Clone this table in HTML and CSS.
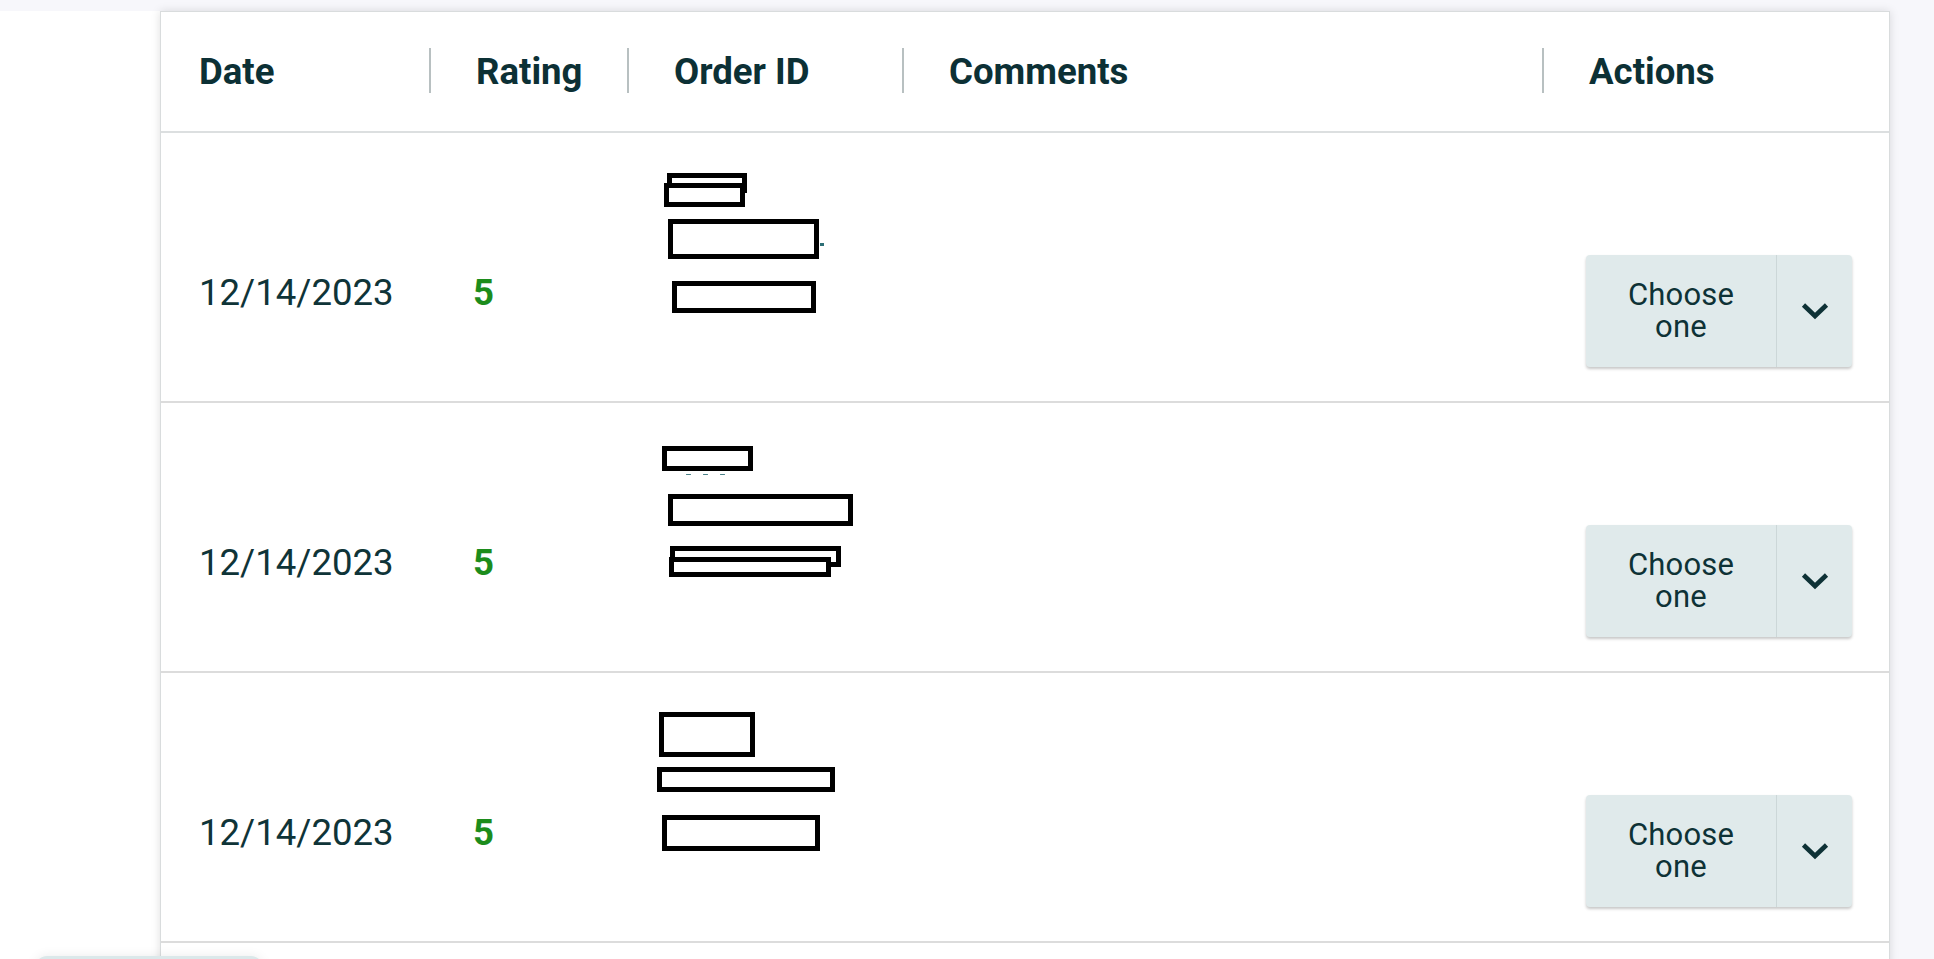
FILE: index.html
```html
<!DOCTYPE html>
<html lang="en">
<head>
<meta charset="utf-8">
<title>Reviews</title>
<link rel="stylesheet" href="styles.css">
</head>
<body>
<div class="layout">
  <div class="rail"></div>
  <main class="main">
    <div class="card">
      <div class="grid head">
        <div class="hcell c1">Date</div>
        <div class="hcell">Rating</div>
        <div class="hcell">Order ID</div>
        <div class="hcell">Comments</div>
        <div class="hcell">Actions</div>
      </div>

      <div class="grid row">
        <div class="cell c1 date">12/14/2023</div>
        <div class="cell rating">5</div>
        <div class="cell order">
          <span class="peek dash" style="left:193px;top:110px"></span>
          <span class="peek dots" style="left:48px;top:145px;width:133px"></span>
          <span class="redact" style="left:40px;top:40px;width:80px;height:20px"></span>
          <span class="redact" style="left:37px;top:50px;width:81px;height:24px"></span>
          <span class="redact" style="left:41px;top:86px;width:151px;height:40px"></span>
          <span class="redact" style="left:45px;top:148px;width:144px;height:32px"></span>
        </div>
        <div class="cell comments"></div>
        <div class="cell actions">
          <div class="split">
            <button class="split-main">Choose one</button>
            <button class="split-toggle" aria-label="More">
              <svg width="28" height="18" viewBox="0 0 28 18"><polyline points="2.5,3 14,14 25.5,3" fill="none" stroke="currentColor" stroke-width="4.6"/></svg>
            </button>
          </div>
        </div>
      </div>

      <div class="grid row">
        <div class="cell c1 date">12/14/2023</div>
        <div class="cell rating">5</div>
        <div class="cell order">
          <span class="peek dots" style="left:53px;top:67px;width:50px"></span>
          <span class="redact" style="left:35px;top:43px;width:91px;height:25px"></span>
          <span class="redact" style="left:41px;top:91px;width:185px;height:32px"></span>
          <span class="redact" style="left:43px;top:143px;width:171px;height:21px"></span>
          <span class="redact" style="left:42px;top:154px;width:162px;height:20px"></span>
        </div>
        <div class="cell comments"></div>
        <div class="cell actions">
          <div class="split">
            <button class="split-main">Choose one</button>
            <button class="split-toggle" aria-label="More">
              <svg width="28" height="18" viewBox="0 0 28 18"><polyline points="2.5,3 14,14 25.5,3" fill="none" stroke="currentColor" stroke-width="4.6"/></svg>
            </button>
          </div>
        </div>
      </div>

      <div class="grid row">
        <div class="cell c1 date">12/14/2023</div>
        <div class="cell rating">5</div>
        <div class="cell order">
          <span class="redact" style="left:32px;top:39px;width:96px;height:45px"></span>
          <span class="redact" style="left:30px;top:94px;width:178px;height:25px"></span>
          <span class="redact" style="left:35px;top:142px;width:158px;height:36px"></span>
        </div>
        <div class="cell comments"></div>
        <div class="cell actions">
          <div class="split">
            <button class="split-main">Choose one</button>
            <button class="split-toggle" aria-label="More">
              <svg width="28" height="18" viewBox="0 0 28 18"><polyline points="2.5,3 14,14 25.5,3" fill="none" stroke="currentColor" stroke-width="4.6"/></svg>
            </button>
          </div>
        </div>
      </div>

      <div class="grid row row-empty">
        <div class="cell c1"></div>
        <div class="cell"></div>
        <div class="cell"></div>
        <div class="cell"></div>
        <div class="cell"></div>
      </div>
    </div>
  </main>
</div>
<div class="fab"></div>
</body>
</html>
```

FILE: styles.css
```css
* { box-sizing: border-box; }

html, body {
  margin: 0;
  padding: 0;
}

body {
  background: #f7f7fb;
  font-family: Roboto, "Noto Sans", "Liberation Sans", sans-serif;
  color: #0e3236;
  overflow: hidden;
}

.layout {
  display: flex;
  padding-top: 11px;
  min-height: 959px;
}

.rail {
  width: 160px;
  flex-shrink: 0;
  background: #ffffff;
}

.main {
  flex: 1;
}

.card {
  width: 1730px;
  background: #ffffff;
  border: 1px solid #d9dcdd;
  border-bottom: none;
  box-shadow: 0 0 9px rgba(0, 0, 0, 0.13);
}

.grid {
  display: grid;
  grid-template-columns: 268px 198px 275px 640px 1fr;
}

.head {
  height: 121px;
  border-bottom: 2px solid #dcdfe0;
  align-items: center;
}

.hcell {
  position: relative;
  font-size: 36.6px;
  line-height: 48px;
  font-weight: 700;
  color: #0c3035;
  padding-left: 47px;
  height: 48px;
}

.hcell::before {
  content: "";
  position: absolute;
  left: 0;
  top: 0;
  width: 2px;
  height: 45px;
  background: #b8c0c1;
}

.hcell.c1::before { display: none; }

.hcell.c1 { padding-left: 38px; }

.row {
  height: 270px;
  border-bottom: 2px solid #dcdcdc;
}

.cell {
  position: relative;
  padding-left: 44px;
}

.cell.c1 { padding-left: 38px; }

.date,
.rating {
  padding-top: 136px;
  font-size: 36.6px;
  line-height: 48px;
}

.date {
  color: #0f3438;
}

.rating {
  font-weight: 700;
  color: #1c8c1c;
  padding-left: 44px;
}

.order {
  padding-left: 0;
}

.redact {
  position: absolute;
  border: 5px solid #000000;
  background: #ffffff;
}

.peek {
  position: absolute;
  display: block;
}

.peek.dash {
  width: 4px;
  height: 3px;
  background: #2d6f76;
}

.peek.dots {
  height: 5px;
  background-image: radial-gradient(circle at 50% 100%, #2a6b72 0 4px, transparent 4.5px);
  background-size: 17px 8px;
  background-position: 0 0;
  opacity: 0.85;
}

.actions {
  padding-top: 122px;
  padding-left: 44px;
}

.split {
  display: flex;
  width: 266px;
  height: 112px;
  background: #e0eaeb;
  border-radius: 4px;
  box-shadow: 0 2px 3px rgba(0, 0, 0, 0.22);
}

.split .split-main,
.split .split-toggle {
  border: none;
  background: transparent;
  color: #0e3236;
  font-family: inherit;
  margin: 0;
  cursor: pointer;
}

.split .split-main {
  width: 191px;
  flex-shrink: 0;
  font-size: 31px;
  line-height: 32.5px;
  letter-spacing: 0.2px;
  text-align: center;
  padding: 0 30px;
  border-right: 1px solid #ccd7d8;
}

.split .split-toggle {
  flex: 1;
  padding: 0;
  display: flex;
  align-items: center;
  justify-content: center;
}

.split-toggle svg {
  display: block;
}

.fab {
  position: fixed;
  left: 35px;
  top: 956px;
  width: 228px;
  height: 48px;
  border-radius: 12px;
  background: #dbe8ea;
  box-shadow: 0 0 12px rgba(0, 0, 0, 0.08);
}
```
